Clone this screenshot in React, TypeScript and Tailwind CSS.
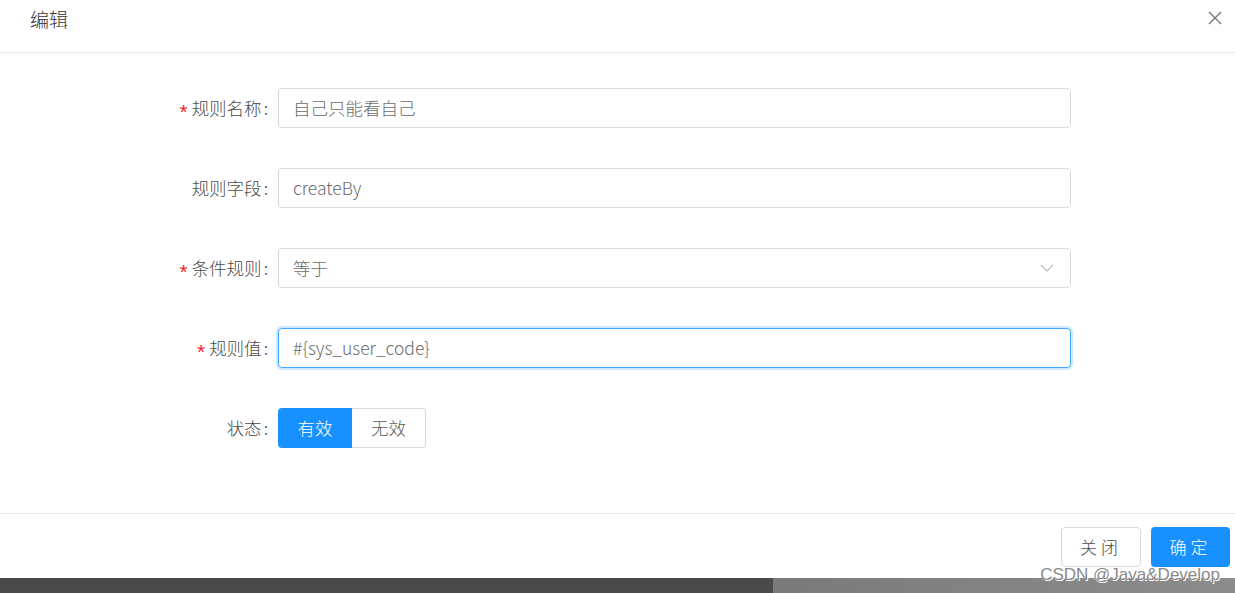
import { ReactNode } from "react";

const font = { fontFamily: '"Noto Sans CJK SC", "Liberation Sans", sans-serif' };

function Row({ label, required, children }: { label: string; required?: boolean; children: ReactNode }) {
  return (
    <div className="flex h-10 items-center">
      <div className="flex w-[268px] items-center justify-end text-[17.5px] text-[#4a4a4a]">
        {required && (
          <span
            className="mr-[4px] mt-[7px] text-[21px] leading-none text-[#f5222d]"
            style={{ fontFamily: '"Liberation Sans", sans-serif' }}
          >
            *
          </span>
        )}
        <span>{label}</span>
        <span className="ml-[2px]">:</span>
      </div>
      <div className="ml-[10px] w-[793px]">{children}</div>
    </div>
  );
}

export default function App() {
  return (
    <div className="relative flex h-[593px] w-full flex-col overflow-hidden bg-white font-light" style={font}>
      <div className="flex h-[578px] flex-col rounded-b-[4px] bg-white">
        <div className="flex h-[53px] shrink-0 items-center justify-between border-b border-[#e8e8e8] pl-[30px] pr-[12px] pb-[14px]">
          <span className="text-[19px] text-[#333]">编辑</span>
          <svg width="16" height="16" viewBox="0 0 16 16" className="mt-[-2px]">
            <path d="M2 2L14 14M14 2L2 14" stroke="#777" strokeWidth="1.4" fill="none" />
          </svg>
        </div>

        <div className="flex flex-1 flex-col gap-[40px] pt-[35px]">
          <Row label="规则名称" required>
            <div className="flex h-10 items-center rounded-[4px] border border-[#d9d9d9] px-[14px] text-[17.5px] text-[#6b6b6b]">
              自己只能看自己
            </div>
          </Row>
          <Row label="规则字段">
            <div className="flex h-10 items-center rounded-[4px] border border-[#d9d9d9] px-[14px] text-[17.5px] text-[#6b6b6b]">
              createBy
            </div>
          </Row>
          <Row label="条件规则" required>
            <div className="flex h-10 items-center justify-between rounded-[4px] border border-[#d9d9d9] pl-[14px] pr-[16px] text-[17.5px] text-[#6b6b6b]">
              <span>等于</span>
              <svg width="14" height="10" viewBox="0 0 14 10">
                <path d="M1 2L7 8L13 2" stroke="#bdbdbd" strokeWidth="1.2" fill="none" />
              </svg>
            </div>
          </Row>
          <Row label="规则值" required>
            <div className="flex h-10 items-center rounded-[4px] border border-[#40a9ff] px-[14px] text-[17.5px] text-[#6b6b6b] shadow-[0_0_0_2px_rgba(24,144,255,0.2)]">
              #{"{"}sys_user_code{"}"}
            </div>
          </Row>
          <Row label="状态">
            <div className="flex h-10 text-[17.5px]">
              <div className="flex w-[74px] items-center justify-center rounded-l-[4px] bg-[#1890ff] text-white">有效</div>
              <div className="flex w-[74px] items-center justify-center rounded-r-[4px] border border-l-0 border-[#d9d9d9] text-[#5a5a5a]">
                无效
              </div>
            </div>
          </Row>
        </div>

        <div className="flex h-[65px] shrink-0 items-center justify-end gap-[10px] border-t border-[#e8e8e8] pr-[5px] pt-[1px]">
          <button className="flex h-10 w-[80px] items-center justify-center rounded-[4px] border border-[#d9d9d9] bg-white text-[17px] tracking-[4px] text-[#4a4a4a]">
            关闭
          </button>
          <button className="flex h-10 w-[79px] items-center justify-center rounded-[4px] bg-[#1890ff] text-[17px] tracking-[4px] text-white">
            确定
          </button>
        </div>
      </div>

      <div className="flex h-[15px] shrink-0">
        <div className="w-[773px] bg-[#4a4a4a]" />
        <div className="flex-1 bg-gradient-to-r from-[#7a7a7a] to-[#8c8c8c]" />
      </div>

      <div
        className="absolute bottom-[6px] right-[15px] text-[17px] font-normal text-[#8a8a8a] [text-shadow:1px_1px_0_#fff,-1px_-1px_0_#fff]"
        style={{ fontFamily: '"Liberation Sans", Arial, sans-serif' }}
      >
        CSDN @Java&amp;Develop
      </div>
    </div>
  );
}
